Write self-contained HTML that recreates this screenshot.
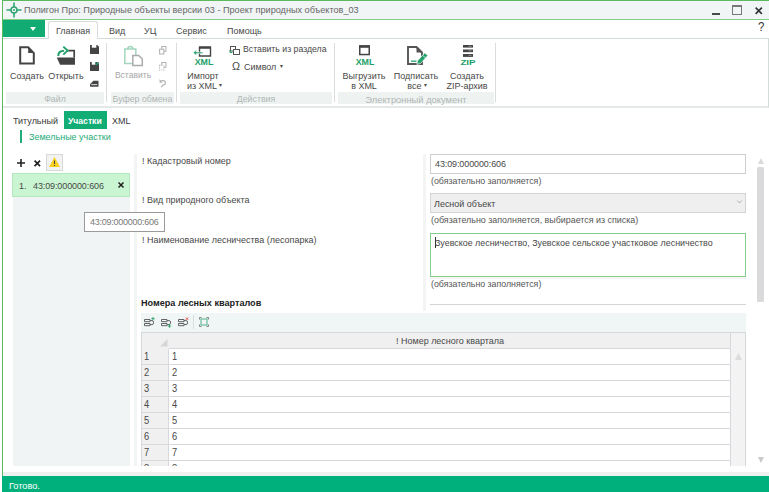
<!DOCTYPE html>
<html lang="ru">
<head>
<meta charset="utf-8">
<title>Полигон Про</title>
<style>
html,body{margin:0;padding:0;background:#fff;}
body{width:769px;height:492px;overflow:hidden;position:relative;font-family:"Liberation Sans",sans-serif;font-size:9.4px;color:#484848;}
.a{position:absolute;white-space:nowrap;line-height:11px;margin-top:-1.2px;transform:scaleX(.957);transform-origin:0 0;}
.c{text-align:center;transform-origin:50% 0;}
.box{position:absolute;box-sizing:border-box;}
svg{position:absolute;overflow:visible;}
.ic{transform:none;color:#23a06a;font-weight:bold;}
.n{font-size:10.8px;transform:scaleX(.86);margin-top:-0.8px;}
.gl{color:#b0b6b4;font-size:9.2px;}
.hint{color:#555;font-size:9.2px;}
</style>
</head>
<body>
<!-- window frame -->
<div class="box" style="left:2px;top:0;width:767px;height:1px;background:#5cb95f;"></div>
<div class="box" style="left:2px;top:0;width:1px;height:492px;background:#5cb95f;"></div>
<!-- title bar -->
<div class="box" style="left:3px;top:1px;width:766px;height:18px;background:#f1f5f5;"></div>
<div class="box" style="left:3px;top:19px;width:766px;height:1px;background:#7fcf86;"></div>
<svg style="left:5.600px;top:2.300px" width="16" height="16" viewBox="0 0 16 16"><g fill="none" stroke="#2fa673" stroke-width="1.6"><circle cx="8" cy="8" r="3"/><path d="M8 0.5v4.5M8 11v4.5M0.5 8h4.5M11 8h4.5"/></g><circle cx="8" cy="8" r="1" fill="#2fa673"/></svg>
<div class="a" style="left:24.300px;top:5.200px;font-size:9.9px;transform:scaleX(.923);color:#666;">Полигон Про: Природные объекты версии 03 - Проект природных объектов_03</div>
<!-- window buttons -->
<div class="box" style="left:712px;top:12.500px;width:8px;height:2px;background:#4a4a4a;"></div>
<div class="box" style="left:732px;top:5px;width:10px;height:10px;border:1px solid #777;border-top-width:2px;"></div>
<svg style="left:755px;top:7px" width="7.500" height="7.500" viewBox="0 0 8 8"><path d="M0.7 0.7l6.6 6.6M7.3 0.7l-6.6 6.6" stroke="#333" stroke-width="1.7" fill="none"/></svg>
<!-- menu row -->
<div class="box" style="left:3px;top:20px;width:42px;height:17px;background:#12ab74;"></div>
<svg style="left:30px;top:27px" width="6" height="4" viewBox="0 0 6 4"><path d="M0 0h6l-3 4z" fill="#fff"/></svg>
<div class="box" style="left:48px;top:21px;width:50px;height:18px;border:1px solid #d6dcd9;border-bottom:none;border-radius:3px 3px 0 0;background:#fff;z-index:2;"></div>
<div class="a" style="left:56px;top:25.900px;z-index:3;font-size:9.9px;transform:scaleX(.91);">Главная</div>
<div class="a" style="left:109px;top:26.200px;font-size:9.9px;transform:scaleX(.91);">Вид</div>
<div class="a" style="left:144px;top:26.200px;font-size:9.9px;transform:scaleX(.91);">УЦ</div>
<div class="a" style="left:176px;top:26.200px;font-size:9.9px;transform:scaleX(.91);">Сервис</div>
<div class="a" style="left:227px;top:26.200px;font-size:9.9px;transform:scaleX(.91);">Помощь</div>
<div class="a" style="left:757.500px;top:22.500px;font-size:12.03px;line-height:13px;color:#333;">?</div>
<!-- ribbon -->
<div class="box" style="left:3px;top:38px;width:766px;height:70px;border-top:1px solid #d3dcd8;border-bottom:2px solid #e4e8e7;border-right:1px solid #d3dcd8;background:#fff;"></div>
<!-- group label backgrounds -->
<div class="box" style="left:6px;top:92px;width:98px;height:11.5px;background:#eef3f2;"></div>
<div class="box" style="left:111px;top:92px;width:63px;height:11.5px;background:#eef3f2;"></div>
<div class="box" style="left:180px;top:92px;width:152px;height:11.5px;background:#eef3f2;"></div>
<div class="box" style="left:338px;top:92px;width:156px;height:11.5px;background:#eef3f2;"></div>
<div class="a c gl" style="left:6px;top:95.2px;width:98px;">Файл</div>
<div class="a c gl" style="left:111px;top:95.2px;width:63px;">Буфер обмена</div>
<div class="a c gl" style="left:180px;top:95.2px;width:152px;">Действия</div>
<div class="a c gl" style="left:338px;top:95.2px;width:156px;font-size:9.77px;">Электронный документ</div>
<!-- separators -->
<div class="box" style="left:106px;top:43px;width:1px;height:59px;background:#d9dedc;"></div>
<div class="box" style="left:176px;top:43px;width:1px;height:59px;background:#d9dedc;"></div>
<div class="box" style="left:334px;top:43px;width:1px;height:59px;background:#d9dedc;"></div>
<div class="box" style="left:495px;top:43px;width:1px;height:59px;background:#d9dedc;"></div>
<!-- File group -->
<svg style="left:19px;top:45.700px" width="16" height="18.800" viewBox="0 0 16 18" preserveAspectRatio="none"><path d="M1.2 1.200h8l5.600 5.600v10h-13.600z" fill="#fff" stroke="#444" stroke-width="2"/><path d="M9.200 1.200v5.600h5.600z" fill="#444"/></svg>
<div class="a c" style="left:7px;top:70.9px;width:40px;">Создать</div>
<svg style="left:55px;top:44px" width="22" height="22" viewBox="0 0 22 22"><path d="M1.800 13.500h18.200v7.200h-15z" fill="#444"/><path d="M12.800 6.600h6.400v7" fill="none" stroke="#444" stroke-width="1.700"/><path d="M3.200 12c0-3.600 2-5.300 6-5.300" fill="none" stroke="#23a06a" stroke-width="2"/><path d="M8.300 2.600l4.300 4-4.300 4" fill="none" stroke="#23a06a" stroke-width="1.900" stroke-linejoin="miter"/></svg>
<div class="a c" style="left:46px;top:70.9px;width:40px;">Открыть</div>
<svg style="left:89.500px;top:45px" width="9" height="9" viewBox="0 0 10 10"><path d="M0 0h8l2 2v8h-10z" fill="#444"/><rect x="2" y="0" width="5" height="3" fill="#fff"/></svg>
<svg style="left:89.500px;top:61.500px" width="9" height="9" viewBox="0 0 10 10"><path d="M0 0h8l2 2v8h-10z" fill="#444"/><rect x="2" y="0" width="4" height="3" fill="#fff"/><path d="M6 1l1.500 2 2-3" stroke="#1f9d63" stroke-width="1.2" fill="none"/></svg>
<svg style="left:90px;top:80px" width="8.500" height="7.600" viewBox="0 0 10 9"><path d="M0 5l4-4h6v7h-10z" fill="#444"/><path d="M1.500 5.500h7" stroke="#fff" stroke-width="1"/></svg>
<!-- Clipboard group -->
<svg style="left:124px;top:44.500px" width="20" height="22" viewBox="0 0 20 22"><path d="M0.800 4h11v14.500h-11z" fill="none" stroke="#a3d6bd" stroke-width="1.500"/><path d="M3.800 4a2.500 2.500 0 0 1 5 0" fill="none" stroke="#a3d6bd" stroke-width="1.500"/><path d="M8.800 10.500h6l3.500 3.500v6.500h-9.500z" fill="#fff" stroke="#ababab" stroke-width="1.500"/></svg>
<div class="a c" style="left:113px;top:70.9px;width:40px;color:#a5a5a5;font-size:8.93px;">Вставить</div>
<svg style="left:158.500px;top:45.500px" width="7.500" height="8.500" viewBox="0 0 7 8"><rect x="2.500" y="0.500" width="4" height="4.500" fill="none" stroke="#b5b5b5"/><rect x="0.500" y="3" width="4" height="4.500" fill="#fff" stroke="#b5b5b5"/></svg>
<svg style="left:158.500px;top:62px" width="7.500" height="8.500" viewBox="0 0 7 8"><rect x="2.500" y="0.500" width="4" height="4.500" fill="none" stroke="#b5b5b5"/><rect x="0.500" y="3" width="4" height="4.500" fill="#fff" stroke="#b5b5b5" stroke-dasharray="1 1"/></svg>
<svg style="left:158.500px;top:78.500px" width="7.500" height="8.500" viewBox="0 0 7 8"><path d="M2 1.500h2a2 2 0 0 1 0 4l-2 2" fill="none" stroke="#b5b5b5" stroke-width="1.100"/><path d="M0.500 0v3.500h3z" fill="#b5b5b5"/></svg>
<!-- Actions group -->
<svg style="left:193px;top:46px" width="18" height="11" viewBox="0 0 18 11"><path d="M6.500 1.500h11v8.500h-11z" fill="none" stroke="#444" stroke-width="1.400"/><path d="M6 1.500h12" stroke="#444" stroke-width="2.400"/><path d="M0.300 6.800l3-2.700v1.900h6.500v1.600h-6.500v1.900z" fill="#23a06a" stroke="#fff" stroke-width=".5"/></svg>
<div class="a c ic" style="left:190px;top:58px;width:28px;font-size:8.9px;">XML</div>
<div class="a c" style="left:183px;top:70.9px;width:40px;">Импорт</div>
<div class="a" style="left:187px;top:80.7px;">из XML <span style="font-size:6px;position:relative;top:-1.7px;">▾</span></div>
<svg style="left:230px;top:46px" width="10" height="9" viewBox="0 0 10 9"><rect x="0.500" y="0.500" width="5" height="4.500" fill="none" stroke="#555"/><rect x="3.500" y="3.500" width="6" height="5" fill="#fff" stroke="#555"/><path d="M0 4v2.500h2.500" stroke="#1f9d63" fill="none"/></svg>
<div class="a" style="left:242.500px;top:45.5px;font-size:9.11px;">Вставить из раздела</div>
<div class="a" style="left:232px;top:62px;font-size:11.28px;">Ω</div>
<div class="a" style="left:244px;top:61.800px;">Символ <span style="font-size:6px;position:relative;left:1px;top:-1.7px;">▾</span></div>
<!-- Electronic document group -->
<svg style="left:358.500px;top:45px" width="11" height="10.600" viewBox="0 0 11 10"><rect x="0.750" y="0.750" width="9.500" height="8.500" fill="none" stroke="#444" stroke-width="1.500"/><path d="M0 1.250h11" stroke="#444" stroke-width="2.500"/></svg>
<div class="a c ic" style="left:351px;top:58px;width:28px;font-size:8.9px;">XML</div>
<div class="a c" style="left:339px;top:70.9px;width:50px;">Выгрузить</div>
<div class="a c" style="left:339px;top:80.7px;width:50px;">в XML</div>
<svg style="left:406.500px;top:46px" width="22" height="20" viewBox="0 0 22 20"><path d="M1 1h8.500l5.500 5.500v11.500h-14z" fill="#fff" stroke="#555" stroke-width="1.900"/><path d="M9.500 1v5.500h5.500z" fill="#555"/><path d="M4 15.200h5.500" stroke="#23a06a" stroke-width="1.300"/><path d="M10.500 14.800l7.300-8 3 2.700-7.300 8-3.600 .9z" fill="#23a06a" stroke="#fff" stroke-width=".7"/><path d="M15.600 9.300l3 2.700" stroke="#fff" stroke-width=".7"/></svg>
<div class="a c" style="left:391px;top:70.9px;width:50px;">Подписать</div>
<div class="a c" style="left:392px;top:80.7px;width:50px;">все <span style="font-size:6px;position:relative;top:-1.7px;">▾</span></div>
<svg style="left:463px;top:45px" width="10" height="12" viewBox="0 0 10 12"><rect x="0" y="0" width="10" height="2.600" fill="#444"/><rect x="0" y="4.500" width="10" height="2.700" fill="#444"/><rect x="0" y="9" width="10" height="2.900" fill="#444"/><path d="M5.500 1.300h3M5.500 5.800h3M5.500 10.400h3" stroke="#9a9a9a" stroke-width=".8"/></svg>
<div class="a c ic" style="left:454px;top:58px;width:28px;font-size:7.800px;transform:scaleX(1.25);">ZIP</div>
<div class="a c" style="left:442px;top:70.9px;width:50px;">Создать</div>
<div class="a c" style="left:442px;top:80.7px;width:50px;">ZIP-архив</div>

<!-- sub tabs -->
<div class="a" style="left:12.500px;top:115.700px;color:#383838;font-size:9.9px;transform:scaleX(.91);">Титульный</div>
<div class="box" style="left:64px;top:111px;width:43px;height:18px;background:#12ad75;"></div>
<div class="a" style="left:67.800px;top:115.800px;color:#fff;font-weight:bold;font-size:9.9px;transform:scaleX(.87);">Участки</div>
<div class="a" style="left:112px;top:115.700px;color:#383838;font-size:9.9px;transform:scaleX(.91);">XML</div>
<div class="box" style="left:20px;top:130px;width:2px;height:13px;background:#21ad77;"></div>
<div class="a" style="left:29px;top:131.800px;color:#25ab78;">Земельные участки</div>

<!-- left panel -->
<div class="box" style="left:13px;top:173px;width:117px;height:293px;background:#f0f4f4;"></div>
<svg style="left:17px;top:159px" width="8" height="8" viewBox="0 0 8 8"><path d="M4 0v8M0 4h8" stroke="#222" stroke-width="1.600"/></svg>
<svg style="left:34.300px;top:159.700px" width="6.600" height="6.600" viewBox="0 0 6 6"><path d="M0.500 0.500l5 5M5.500 0.500l-5 5" stroke="#222" stroke-width="1.500"/></svg>
<div class="box" style="left:46px;top:154px;width:17px;height:17px;border:1px solid #d8d8d8;background:#f2f2f2;"></div>
<svg style="left:49px;top:157px" width="11" height="10" viewBox="0 0 11 10"><path d="M5.500 0l5.500 10h-11z" fill="#f9d11f"/><path d="M5.500 3.500v3.500M5.500 8v1" stroke="#444" stroke-width="1.100"/></svg>
<div class="box" style="left:12px;top:173px;width:118px;height:24px;background:#caf5d2;border:1px solid #b4e9be;"></div>
<div class="a" style="left:18.700px;top:181px;">1.</div>
<div class="a" style="left:32.500px;top:181px;letter-spacing:-0.100px;">43:09:000000:606</div>
<svg style="left:118px;top:182px" width="6" height="6" viewBox="0 0 6 6"><path d="M0.500 0.500l5 5M5.500 0.500l-5 5" stroke="#222" stroke-width="1.500"/></svg>
<!-- splitters -->
<div class="box" style="left:134px;top:154px;width:3px;height:312px;background:#f3f5f5;"></div>
<div class="box" style="left:423px;top:154px;width:3px;height:157px;background:#f3f5f5;"></div>

<!-- labels -->
<div class="a" style="left:141.800px;top:156px;">! Кадастровый номер</div>
<div class="a" style="left:141.800px;top:195.500px;">! Вид природного объекта</div>
<div class="a" style="left:141.800px;top:235px;">! Наименование лесничества (лесопарка)</div>
<div class="a" style="left:141px;top:299.500px;font-weight:bold;color:#222;font-size:9.1px;transform:none;">Номера лесных кварталов</div>

<!-- inputs -->
<div class="box" style="left:430px;top:154px;width:316px;height:20px;border:1px solid #cfcfcf;background:#fff;"></div>
<div class="a" style="left:435px;top:159.5px;letter-spacing:-0.100px;">43:09:000000:606</div>
<div class="a hint" style="left:430.500px;top:177px;">(обязательно заполняется)</div>
<div class="box" style="left:430px;top:193px;width:316px;height:19.500px;border:1px solid #d4d4d4;background:#efefef;"></div>
<div class="a" style="left:434px;top:198.900px;">Лесной объект</div>
<svg style="left:737px;top:200px" width="5" height="4" viewBox="0 0 5 4"><path d="M0.300 0.500l2.200 2.500 2.200-2.500" stroke="#aaa" fill="none" stroke-width=".9"/></svg>
<div class="a hint" style="left:430.500px;top:216.5px;font-size:9.3px;">(обязательно заполняется, выбирается из списка)</div>
<div class="box" style="left:430px;top:233px;width:316px;height:43.500px;border:1px solid #82ce8c;background:#fff;"></div>
<div class="box" style="left:430px;top:276.500px;width:316px;height:2px;background:#f4f6f6;"></div>
<div class="box" style="left:435px;top:237px;width:1px;height:11px;background:#333;"></div>
<div class="a" style="left:435px;top:239px;font-size:9.3px;">Зуевское лесничество, Зуевское сельское участковое лесничество</div>
<div class="a hint" style="left:430.500px;top:280.4px;">(обязательно заполняется)</div>
<div class="box" style="left:430px;top:304px;width:316px;height:1px;background:#d4d4d4;"></div>
<!-- outer scrollbar -->
<svg style="left:758px;top:158px" width="6" height="6" viewBox="0 0 6 6"><path d="M3 0l3 6h-6z" fill="#d9d9d9"/></svg>
<div class="box" style="left:757px;top:167px;width:7px;height:134.500px;background:#dadadc;border-radius:1.500px;"></div>
<svg style="left:757.500px;top:456.500px" width="6" height="6" viewBox="0 0 6 6"><path d="M0 0h6l-3 6z" fill="#c6cac8"/></svg>

<!-- grid toolbar -->
<div class="box" style="left:141px;top:313px;width:605px;height:19.500px;background:#f0f5f5;"></div>
<svg style="left:144px;top:316.500px" width="11" height="10" viewBox="0 0 11 10"><path d="M0.500 2.500h5.500v2.200h-5.500zM0.500 6.500h5.500v2.200h-5.500z" fill="none" stroke="#555" stroke-width=".9"/><path d="M6 3.600h2a1.500 1.500 0 0 1 1.500 1.500v1a1.500 1.500 0 0 1-1.500 1.500h-2" fill="none" stroke="#555" stroke-width=".9"/><path d="M9 0v3.400M7.300 1.700h3.400" stroke="#23a06a" stroke-width=".9"/></svg>
<svg style="left:161px;top:316.500px" width="11" height="11" viewBox="0 0 11 11"><path d="M0.500 2.500h5.500v2.200h-5.500zM0.500 6.500h5.500v2.200h-5.500z" fill="none" stroke="#555" stroke-width=".9"/><path d="M6 3.600h2a1.500 1.500 0 0 1 1.500 1.500v1a1.500 1.500 0 0 1-1.500 1.500h-2" fill="none" stroke="#555" stroke-width=".9"/><path d="M8.500 7.400v3.400M6.800 9.100h3.400" stroke="#23a06a" stroke-width=".9"/></svg>
<svg style="left:178px;top:316.500px" width="11" height="10" viewBox="0 0 11 10"><path d="M0.500 2.500h5.500v2.200h-5.500zM0.500 6.500h5.500v2.200h-5.500z" fill="none" stroke="#555" stroke-width=".9"/><path d="M6 3.600h2a1.500 1.500 0 0 1 1.500 1.500v1a1.500 1.500 0 0 1-1.500 1.500h-2" fill="none" stroke="#555" stroke-width=".9"/><path d="M7.700 0.400l2.600 2.600M10.300 0.400l-2.600 2.600" stroke="#e0584a" stroke-width=".9"/></svg>
<div class="box" style="left:193px;top:315px;width:1px;height:14px;background:#dcdcdc;"></div>
<svg style="left:199px;top:317px" width="10" height="10" viewBox="0 0 10 10"><rect x="2" y="2" width="6" height="6" fill="none" stroke="#4fb18b" stroke-width="1"/><path d="M0.500 2.500v-2h2M7.500 0.500h2v2M9.500 7.500v2h-2M2.500 9.500h-2v-2" fill="none" stroke="#777" stroke-width=".9"/></svg>

<!-- grid -->
<div class="box" style="left:141px;top:332px;width:605px;height:133.500px;overflow:hidden;background:#fff;border-left:1px solid #d6d8de;border-top:1px solid #d6d8de;border-right:1px solid #d6d8de;">
  <div class="box" style="left:0;top:0;width:588px;height:16px;background:#f0f0f0;"></div>
  <div class="box" style="left:27px;top:15px;width:561px;height:1px;background:#d6d8de;"></div>
  <div class="box" style="left:0;top:16px;width:27px;height:118px;background:#f0f0f0;border-right:1px solid #d6d8de;"></div>
  <svg style="left:17.500px;top:6px" width="7.500" height="7.500" viewBox="0 0 7 7"><path d="M7 0v7h-7z" fill="#d6d6d6"/></svg>
  <div class="a c" style="left:28px;top:3.500px;width:560px;">! Номер лесного квартала</div>
  <div class="box" style="left:588px;top:0;width:17px;height:134px;background:#f3f3f3;border-left:1px solid #d6d8de;"></div>
  <svg style="left:593px;top:19.500px" width="7" height="7" viewBox="0 0 7 7"><path d="M3.500 0l3.500 7h-7z" fill="#dcdcdc"/></svg>
  <div class="box" style="left:0;top:31px;width:588px;height:1px;background:#d6d8de;"></div>
  <div class="box" style="left:0;top:47px;width:588px;height:1px;background:#d6d8de;"></div>
  <div class="box" style="left:0;top:63px;width:588px;height:1px;background:#d6d8de;"></div>
  <div class="box" style="left:0;top:79px;width:588px;height:1px;background:#d6d8de;"></div>
  <div class="box" style="left:0;top:95px;width:588px;height:1px;background:#d6d8de;"></div>
  <div class="box" style="left:0;top:111px;width:588px;height:1px;background:#d6d8de;"></div>
  <div class="box" style="left:0;top:127px;width:588px;height:1px;background:#d6d8de;"></div>
  <div class="a n" style="left:1.5px;top:18.5px;">1</div><div class="a n" style="left:29.5px;top:18.5px;">1</div>
  <div class="a n" style="left:1.5px;top:34.5px;">2</div><div class="a n" style="left:29.5px;top:34.5px;">2</div>
  <div class="a n" style="left:1.5px;top:50.5px;">3</div><div class="a n" style="left:29.5px;top:50.5px;">3</div>
  <div class="a n" style="left:1.5px;top:66.5px;">4</div><div class="a n" style="left:29.5px;top:66.5px;">4</div>
  <div class="a n" style="left:1.5px;top:82.5px;">5</div><div class="a n" style="left:29.5px;top:82.5px;">5</div>
  <div class="a n" style="left:1.5px;top:98.5px;">6</div><div class="a n" style="left:29.5px;top:98.5px;">6</div>
  <div class="a n" style="left:1.5px;top:114.5px;">7</div><div class="a n" style="left:29.5px;top:114.5px;">7</div>
  <div class="a n" style="left:1.5px;top:130.5px;">8</div><div class="a n" style="left:29.5px;top:130.5px;">8</div>
</div>

<!-- tooltip -->
<div class="box" style="left:84px;top:212px;width:81px;height:20px;border:1px solid #9a9a9a;background:#fff;z-index:5;"></div>
<div class="a" style="left:89.500px;top:217.300px;color:#777;z-index:6;letter-spacing:-0.250px;">43:09:000000:606</div>

<!-- status bar -->
<div class="box" style="left:3px;top:472px;width:766px;height:4px;background:#f0f0f0;"></div>
<div class="box" style="left:2px;top:476px;width:767px;height:16px;background:#00b07c;"></div>
<div class="a" style="left:9px;top:481px;color:#fff;font-size:9.6px;">Готово.</div>
</body>
</html>
